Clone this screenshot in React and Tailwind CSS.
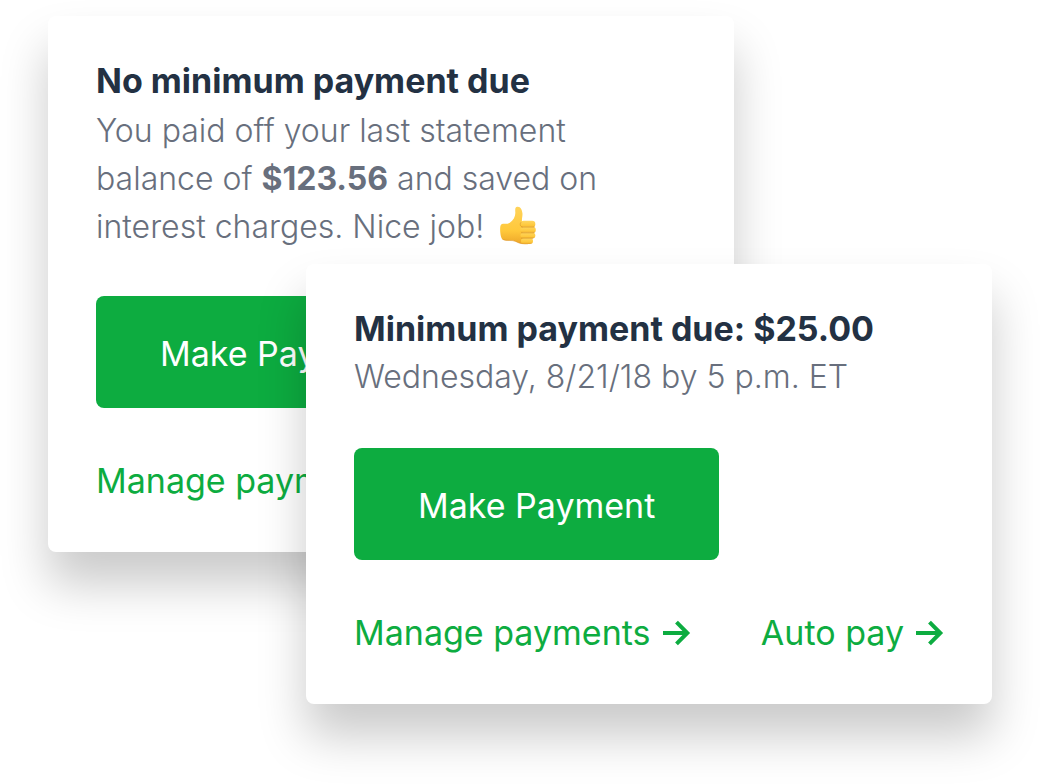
function Arrow() {
  return (
    <svg className="h-8 w-7 shrink-0" viewBox="0 0 28 32" fill="none" stroke="currentColor" strokeWidth="4" aria-hidden="true">
      <path d="M0 16h25M13.5 5.2 24.3 16 13.5 26.8" />
    </svg>
  );
}

function ThumbsUp() {
  return (
    <svg className="ml-4 inline-block h-10 w-9 align-[-8px]" viewBox="0 0 36 40" role="img" aria-label="Thumbs up">
      <defs>
        <linearGradient id="skin" x1="0" y1="0" x2="0" y2="1">
          <stop offset="0" stopColor="#ffd35a" />
          <stop offset="0.65" stopColor="#ffc83a" />
          <stop offset="1" stopColor="#eda62a" />
        </linearGradient>
        <linearGradient id="finger" x1="0" y1="0" x2="0" y2="1">
          <stop offset="0" stopColor="#ffd65f" />
          <stop offset="0.7" stopColor="#fec83c" />
          <stop offset="1" stopColor="#e8a42c" />
        </linearGradient>
      </defs>
      <path
        d="M1.2 18.6C3.6 17 7.2 18.8 9.8 16.8 13.4 14 15.6 10.4 15.3 6.2 15.1 3.2 15 1.1 17.4 .8 20.6.4 22 4 22.4 7 22.8 10 21.6 13 22 15.4L31 18 30 37.5C25 38.6 19.5 37.8 15.5 35.4 11.6 33.6 7 35.4 2.6 33.4.2 32-.8 20 1.2 18.6Z"
        fill="url(#skin)"
      />
      <path d="M2.6 33.4C7 35.4 11.6 33.6 15.5 35.4 19 37.4 24 38.3 28 37.8" stroke="#d98d20" strokeWidth="1" fill="none" opacity="0.5" />
      <rect x="20.5" y="14.8" width="14.8" height="6.6" rx="3.2" fill="url(#finger)" />
      <rect x="20.2" y="20.8" width="15.6" height="6.2" rx="3.1" fill="url(#finger)" />
      <rect x="20.5" y="26.4" width="14.8" height="6" rx="3" fill="url(#finger)" />
      <rect x="21" y="32" width="12" height="5.9" rx="2.9" fill="url(#finger)" />
      <path d="M21 16.4C19.4 18 20.2 20.4 22 21.2M21.5 26.9h12M21.5 32.3h11M22 21.2h12" stroke="#cf8a20" strokeWidth="0.8" strokeLinecap="round" fill="none" opacity="0.6" />
    </svg>
  );
}

function Card({ children, className }) {
  return (
    <section className={`w-full max-w-[686px] rounded-lg bg-white px-12 pt-[41px] pb-[47px] shadow-[0_32px_48px_rgba(0,0,0,0.21)] ${className}`}>
      {children}
    </section>
  );
}

function Title({ children }) {
  return <h2 className="text-[34px] leading-12 font-bold text-[#233143]">{children}</h2>;
}

function PayButton({ className }) {
  return (
    <button type="button" className={`block h-28 rounded-lg bg-[#0dac40] px-16 pt-0.5 text-[34px] text-white ${className}`}>
      Make Payment
    </button>
  );
}

function ArrowLink({ children }) {
  return (
    <a href="#" className="flex items-center gap-3 text-[34px] leading-12 whitespace-nowrap text-[#0dac40]">
      {children}
      <Arrow />
    </a>
  );
}

function Links() {
  return (
    <nav className="mt-[49px] flex flex-wrap justify-between">
      <ArrowLink>Manage payments</ArrowLink>
      <ArrowLink>Auto pay</ArrowLink>
    </nav>
  );
}

export default function App() {
  return (
    <main className="flex min-h-screen flex-col bg-white px-12 pt-4 pb-20 font-['Inter','Liberation_Sans',sans-serif]">
      <Card className="">
        <Title>No minimum payment due</Title>
        <p className="mt-0.5 max-w-[520px] text-[32px] leading-12 font-light text-[#686f7d]">
          You paid off your last statement balance of <strong className="font-bold">$123.56</strong> and saved on
          interest charges. <span className="whitespace-nowrap">Nice job!<ThumbsUp /></span>
        </p>
        <PayButton className="mt-[45px]" />
        <Links />
      </Card>
      <Card className="relative -mt-72 self-end">
        <Title>Minimum payment due: $25.00</Title>
        <p className="text-[32px] leading-12 font-light text-[#686f7d]">Wednesday, 8/21/18 by 5 p.m. ET</p>
        <PayButton className="mt-[47px]" />
        <Links />
      </Card>
    </main>
  );
}
